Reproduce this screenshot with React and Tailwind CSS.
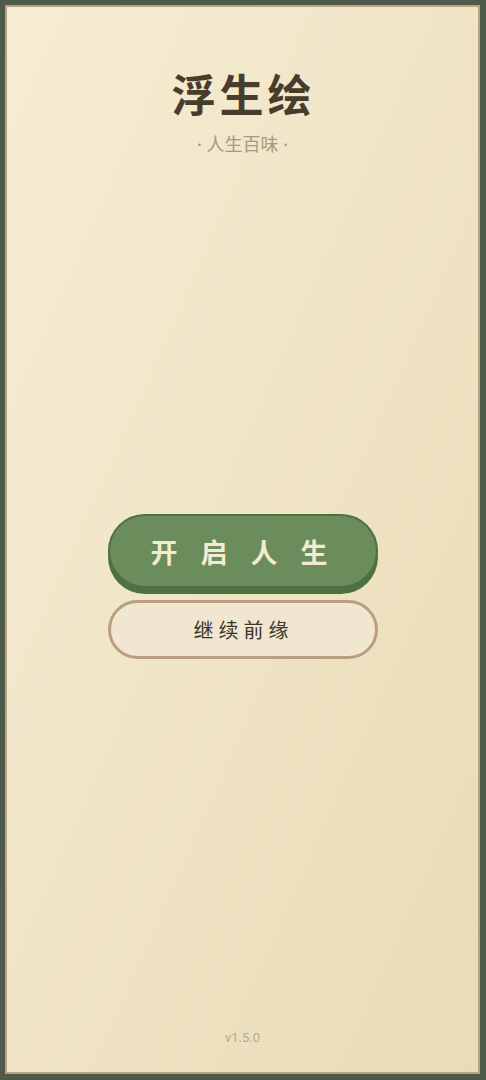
export default function App() {
  return (
    <div className="h-[1080px] w-full bg-[#4f5b49] p-[5px] pr-[6px] pb-[6px]" style={{ fontFamily: '"Noto Sans CJK SC", "Noto Sans", sans-serif' }}>
      <div className="flex h-full flex-col items-center border-2 border-[#b7a282] bg-gradient-to-br from-[#f6edd3] to-[#e9dbb7]">
        <h1 className="mt-[64px] pl-[2px] text-[44px] font-bold leading-none tracking-[4px] text-[#4a3c2b]">
          浮生绘
        </h1>
        <p className="mt-[20px] text-[18px] leading-none text-[#a8997e]" style={{ fontFamily: '"Noto Sans", "Noto Sans CJK SC", sans-serif' }}>
          · 人生百味 ·
        </p>

        <div className="mt-[361px] flex w-[270px] flex-col">
          <button className="flex h-[74px] w-full items-center justify-center rounded-full border-2 border-[#4e7141] bg-[#6a8d5b] pl-[16px] text-[27px] font-bold leading-none tracking-[23px] text-[#f3ead1] shadow-[0_6px_0_#4e7141]">
            开启人生
          </button>
          <button className="mt-[12px] flex h-[59px] w-full items-center justify-center rounded-full border-[3px] border-[#b99f7f] bg-[#f1e7d1] pl-[2px] text-[20px] leading-none tracking-[5px] text-[#3d3428]">
            继续前缘
          </button>
        </div>

        <p className="mb-[25px] mt-auto text-[13px] text-[#b2a78f]" style={{ fontFamily: '"Roboto", sans-serif' }}>
          v1.5.0
        </p>
      </div>
    </div>
  );
}
